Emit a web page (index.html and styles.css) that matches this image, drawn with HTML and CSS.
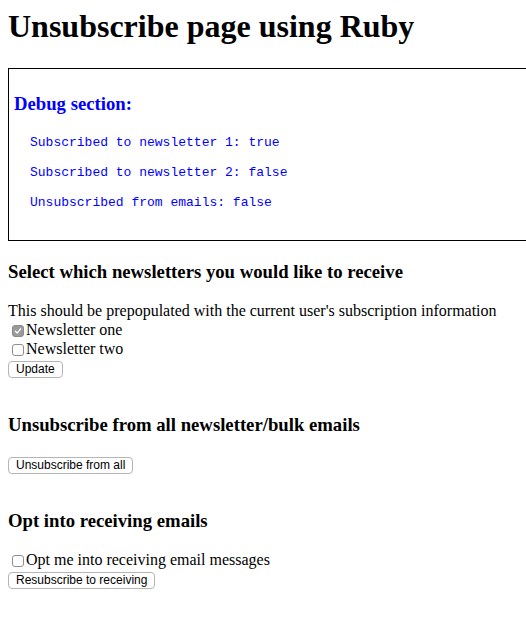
FILE: index.html
```
<!DOCTYPE html>
<html lang="en">
<head>
<meta charset="utf-8">
<title>Unsubscribe page using Ruby</title>
<link rel="stylesheet" href="styles.css">
</head>
<body>
<h1 class="title">Unsubscribe page using Ruby</h1>

<div class="debug">
  <h3 class="debug-title">Debug section:</h3>
  <div class="debug-list">
    <p class="debug-line">Subscribed to newsletter 1: true</p>
    <p class="debug-line">Subscribed to newsletter 2: false</p>
    <p class="debug-line">Unsubscribed from emails: false</p>
  </div>
</div>

<form class="section">
  <h3 class="section-title">Select which newsletters you would like to receive</h3>
  <div class="line">This should be prepopulated with the current user's subscription information</div>
  <label class="line"><span class="cb checked"><svg viewBox="0 0 12 12" width="12" height="12"><path d="M3.4 6.3 L5.2 8.1 L8.6 3.9" fill="none" stroke="#fff" stroke-width="1.4" stroke-linecap="round" stroke-linejoin="round"/></svg></span>Newsletter one</label>
  <label class="line"><span class="cb"></span>Newsletter two</label>
  <div class="actions"><button type="button" class="btn">Update</button></div>
</form>

<form class="section">
  <h3 class="section-title">Unsubscribe from all newsletter/bulk emails</h3>
  <div class="actions"><button type="button" class="btn">Unsubscribe from all</button></div>
</form>

<form class="section">
  <h3 class="section-title">Opt into receiving emails</h3>
  <label class="line"><span class="cb"></span>Opt me into receiving email messages</label>
  <div class="actions"><button type="button" class="btn">Resubscribe to receiving</button></div>
</form>
</body>
</html>
```

FILE: styles.css
```
html {
  overflow-x: hidden;
  background: #fff;
}
body {
  margin: 0;
  padding: 8px;
  font-family: "Liberation Serif", "Times New Roman", serif;
  font-size: 16px;
  color: #000;
  overflow-x: hidden;
}
.title {
  margin: 0 0 23px;
  font-size: 32px;
  line-height: 37px;
  font-weight: bold;
}
.debug {
  width: 100%;
  border: 1px solid #000;
  padding: 5px 5px 5px;
}
.debug-title {
  margin: 18.7px 0 20px;
  font-size: 18.72px;
  line-height: 22px;
  color: #0000ff;
}
.debug-list {
  margin: 0 0 25.3px 16px;
  display: flex;
  flex-direction: column;
  gap: 15px;
}
.debug-line {
  margin: 0;
  font-family: "Liberation Mono", "Courier New", monospace;
  font-size: 13px;
  line-height: 15px;
  color: #0000ff;
}
.section {
  margin: 0;
  padding-bottom: 16.5px;
}
.section-title {
  margin: 18.72px 0;
  font-size: 18.72px;
  line-height: 22px;
  font-weight: bold;
}
.section:first-of-type .section-title {
  margin-top: 19.72px;
}
.line {
  display: block;
  line-height: 19px;
}
.cb {
  display: inline-block;
  box-sizing: border-box;
  width: 12px;
  height: 12px;
  margin: 0 2px 0 4px;
  border: 1px solid #8e8e8e;
  border-radius: 3px;
  background: #fff;
  vertical-align: -2px;
  position: relative;
}
.cb.checked {
  background: #9b9b9b;
  border-color: #8a8a8a;
}
.cb svg {
  position: absolute;
  left: -1px;
  top: -1px;
}
.actions {
  display: flex;
  padding-top: 3px;
}
.btn {
  font-family: "Liberation Sans", Arial, sans-serif;
  font-size: 12px;
  line-height: 13px;
  padding: 1px 7px;
  margin: 0;
  border: 1px solid #b5b5b5;
  border-radius: 4px;
  background: #fff;
  color: #000;
}
```
